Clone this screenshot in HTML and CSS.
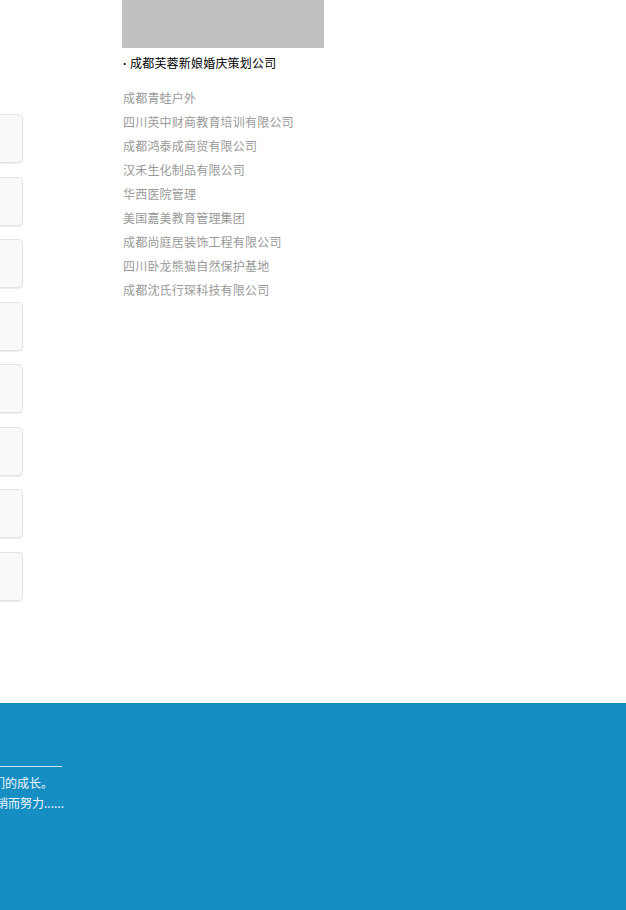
FILE: index.html
```html
<!DOCTYPE html>
<html lang="zh-CN">
<head>
<meta charset="utf-8">
<title>客户</title>
<link rel="stylesheet" href="styles.css">
</head>
<body>
<div class="page">
  <div class="main">
    <div class="side">
      <div class="card"></div>
      <div class="card"></div>
      <div class="card"></div>
      <div class="card"></div>
      <div class="card"></div>
      <div class="card"></div>
      <div class="card"></div>
      <div class="card"></div>
    </div>
    <div class="content">
      <div class="thumb"></div>
      <div class="title"><span class="dot">·</span>成都芙蓉新娘婚庆策划公司</div>
      <ul class="list">
        <li>成都青蛙户外</li>
        <li>四川英中财商教育培训有限公司</li>
        <li>成都鸿泰成商贸有限公司</li>
        <li>汉禾生化制品有限公司</li>
        <li>华西医院管理</li>
        <li>美国嘉美教育管理集团</li>
        <li>成都尚庭居装饰工程有限公司</li>
        <li>四川卧龙熊猫自然保护基地</li>
        <li>成都沈氏行琛科技有限公司</li>
      </ul>
    </div>
  </div>
  <footer class="footer">
    <div class="rule"></div>
    <div class="ftext line1">们的成长。</div>
    <div class="ftext line2">销而努力......</div>
  </footer>
</div>
</body>
</html>
```

FILE: styles.css
```css
html, body {
  margin: 0;
  padding: 0;
  background: #fff;
}
body {
  width: 626px;
  height: 910px;
  overflow: hidden;
  font-family: "Noto Sans CJK SC", "Noto Sans", sans-serif;
  font-size: 12px;
}
.page {
  display: flex;
  flex-direction: column;
  width: 626px;
  height: 910px;
}
.main {
  display: flex;
  height: 703px;
  flex: none;
}
.side {
  width: 122px;
  flex: none;
  padding-top: 114px;
  box-sizing: border-box;
  display: flex;
  flex-direction: column;
  gap: 13.57px;
}
.card {
  width: 22px;
  height: 47px;
  background: #f9f9f9;
  border: 1px solid #e3e3e3;
  border-left: none;
  border-radius: 0 5px 5px 0;
  box-shadow: 0 1px 1px rgba(0, 0, 0, 0.08);
}
.content {
  width: 202px;
  flex: none;
}
.thumb {
  height: 48px;
  background: #c0c0c0;
}
.title {
  margin-top: 3px;
  height: 24px;
  line-height: 24px;
  color: #000;
  padding-left: 1px;
  letter-spacing: 0.2px;
  overflow: hidden;
}
.dot {
  display: inline-block;
  width: 7px;
  line-height: 20px;
  font-family: "Liberation Sans", sans-serif;
  font-weight: bold;
}
.list {
  list-style: none;
  margin: 11px 0 0;
  padding: 0 0 0 1px;
}
.list li {
  line-height: 24px;
  color: #999;
  letter-spacing: 0.2px;
}
.footer {
  flex: 1;
  background: #168dc3;
  padding-top: 63px;
  box-sizing: border-box;
}
.rule {
  width: 62px;
  height: 1px;
  background: #cfe6f2;
  margin-bottom: 6px;
}
.ftext {
  color: #f2f8fc;
  line-height: 20px;
  white-space: nowrap;
}
.line1 {
  margin-left: -7px;
}
.line2 {
  margin-left: -4px;
}
```
